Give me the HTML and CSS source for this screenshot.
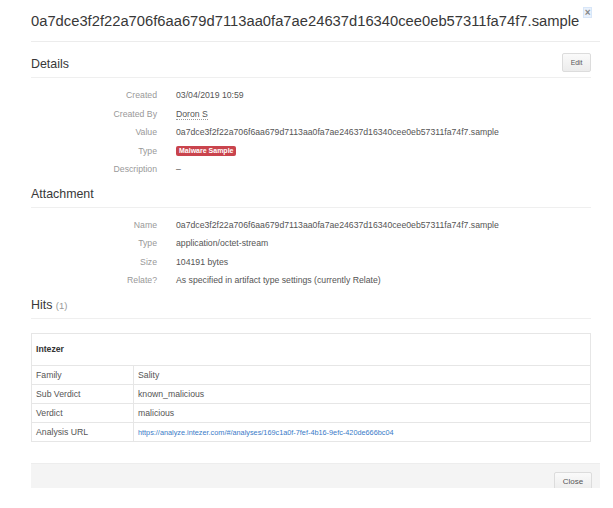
FILE: index.html
```html
<!DOCTYPE html>
<html>
<head>
<meta charset="utf-8">
<link rel="stylesheet" href="styles.css">
</head>
<body>
<div class="modal">
  <div class="modal-header">
    <h1 class="title">0a7dce3f2f22a706f6aa679d7113aa0fa7ae24637d16340cee0eb57311fa74f7.sample</h1>
    <span class="close-x">×</span>
  </div>
  <div class="modal-body">
    <div class="section-head first">
      <h2 class="heading">Details</h2>
      <span class="btn btn-edit">Edit</span>
    </div>
    <div class="props">
      <div class="label">Created</div><div class="value">03/04/2019 10:59</div>
      <div class="label">Created By</div><div class="value"><span class="user">Doron S</span></div>
      <div class="label">Value</div><div class="value">0a7dce3f2f22a706f6aa679d7113aa0fa7ae24637d16340cee0eb57311fa74f7.sample</div>
      <div class="label">Type</div><div class="value"><span class="badge">Malware Sample</span></div>
      <div class="label">Description</div><div class="value">–</div>
    </div>

    <div class="section-head">
      <h2 class="heading">Attachment</h2>
    </div>
    <div class="props">
      <div class="label">Name</div><div class="value">0a7dce3f2f22a706f6aa679d7113aa0fa7ae24637d16340cee0eb57311fa74f7.sample</div>
      <div class="label">Type</div><div class="value">application/octet-stream</div>
      <div class="label">Size</div><div class="value">104191 bytes</div>
      <div class="label">Relate?</div><div class="value">As specified in artifact type settings (currently Relate)</div>
    </div>

    <div class="section-head">
      <h2 class="heading">Hits <span class="count">(1)</span></h2>
    </div>
    <table class="hits">
      <tr class="hit-head"><th colspan="2">Intezer</th></tr>
      <tr><td class="k">Family</td><td>Sality</td></tr>
      <tr><td class="k">Sub Verdict</td><td>known_malicious</td></tr>
      <tr><td class="k">Verdict</td><td>malicious</td></tr>
      <tr><td class="k">Analysis URL</td><td><a class="link" href="#">https://analyze.intezer.com/#/analyses/169c1a0f-7fef-4b16-9efc-420de666bc04</a></td></tr>
    </table>
  </div>
  <div class="modal-footer">
    <span class="btn btn-close">Close</span>
  </div>
</div>
</body>
</html>
```
FILE: styles.css
```css
html, body {
  margin: 0;
  padding: 0;
  background: #fff;
}
body {
  font-family: "Liberation Sans", Arial, sans-serif;
  font-size: 8.7px;
  color: #555;
}
.modal {
  margin-left: 31px;
  width: 569px;
}
.modal-header {
  display: flex;
  align-items: flex-start;
  height: 41px;
  border-bottom: 1px solid #ececec;
  padding-right: 9px;
}
.title {
  margin: 12px 0 0 0;
  font-size: 14.75px;
  line-height: 18px;
  font-weight: normal;
  color: #383838;
  white-space: nowrap;
}
.close-x {
  margin-left: 5px;
  margin-top: 8px;
  width: 8px;
  height: 9px;
  line-height: 9px;
  text-align: center;
  font-size: 10px;
  font-weight: bold;
  color: #888;
  background: #e9f1fc;
  box-shadow: 0 0 0 1px #d8e6f8;
}
.modal-body {
  padding-right: 9px;
}
.section-head {
  display: flex;
  align-items: flex-end;
  justify-content: space-between;
  padding-bottom: 3px;
  border-bottom: 1px solid #efefef;
  margin-top: 6px;
}
.section-head.first {
  margin-top: 11px;
}
.heading {
  margin: 0;
  font-size: 12.4px;
  line-height: 19px;
  font-weight: normal;
  color: #383838;
}
.count {
  font-size: 9.5px;
  color: #999;
}
.btn {
  display: inline-block;
  box-sizing: border-box;
  height: 19px;
  line-height: 17px;
  border: 1px solid #dcdcdc;
  border-radius: 2px;
  background: linear-gradient(#fafafa, #ececec);
  color: #555;
  text-align: center;
}
.btn-edit {
  width: 29px;
  font-size: 6.8px;
  margin-bottom: 2px;
}
.props {
  display: grid;
  grid-template-columns: 126px 1fr;
  column-gap: 19px;
  grid-auto-rows: 18.5px;
  align-items: center;
  margin-top: 8px;
}
.label {
  text-align: right;
  color: #999;
}
.value {
  color: #555;
  white-space: nowrap;
}
.user {
  border-bottom: 1px dotted #999;
}
.badge {
  display: inline-block;
  height: 10px;
  line-height: 10px;
  padding: 0 3px;
  border-radius: 2px;
  background: #c9444d;
  color: #fff;
  font-weight: bold;
  font-size: 7px;
  vertical-align: middle;
}
.hits {
  margin-top: 14px;
  width: 100%;
  border-collapse: collapse;
  border: 1px solid #e6e6e6;
}
.hits th {
  height: 31px;
  text-align: left;
  font-weight: bold;
  color: #333;
  padding: 0 4px;
  border-bottom: 1px solid #e6e6e6;
}
.hits td {
  height: 18px;
  padding: 0 4px;
  border-top: 1px solid #e6e6e6;
  color: #555;
  white-space: nowrap;
}
.hits td.k {
  width: 93px;
  border-right: 1px solid #e6e6e6;
}
.link {
  color: #3a7bc8;
  font-size: 7.3px;
  text-decoration: none;
}
.modal-footer {
  margin-top: 21px;
  height: 25px;
  box-sizing: border-box;
  overflow: hidden;
  background: #f4f4f4;
  border-top: 1px solid #ededed;
  padding-top: 8px;
  padding-right: 8px;
  display: flex;
  justify-content: flex-end;
}
.btn-close {
  width: 38px;
  height: 19px;
  font-size: 8px;
  flex: none;
}
```
